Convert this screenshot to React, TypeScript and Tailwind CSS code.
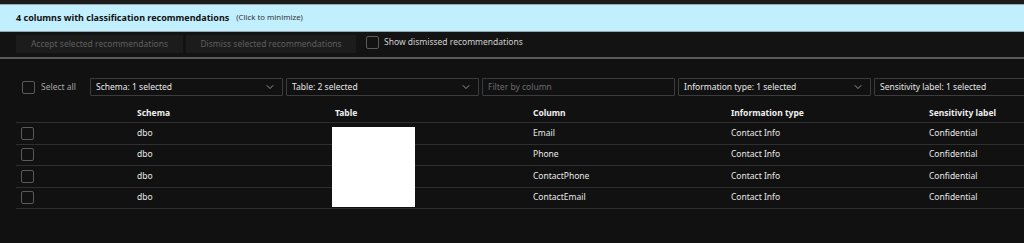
import { ChevronDown } from "lucide-react";

const rows = [
  { schema: "dbo", column: "Email" },
  { schema: "dbo", column: "Phone" },
  { schema: "dbo", column: "ContactPhone" },
  { schema: "dbo", column: "ContactEmail" },
];

function Checkbox() {
  return <div className="w-[13px] h-[13px] border border-[#5a5a5a] rounded-[2px] shrink-0" />;
}

function Dropdown({ label, w = "w-[193px]" }: { label: string; w?: string }) {
  return (
    <div className={`${w} h-[18px] shrink-0 border border-[#3c3c3c] rounded-[1px] flex items-center justify-between pl-[5px] pr-[6px] text-[#e8e8e8]`}>
      <span>{label}</span>
      <ChevronDown size={12} strokeWidth={1.5} className="text-[#bdbdbd]" />
    </div>
  );
}

export default function App() {
  return (
    <div className="w-[1024px] h-[243px] bg-[#111111] overflow-hidden text-[8.5px] whitespace-nowrap" style={{ fontFamily: '"Noto Sans", "Open Sans", sans-serif' }}>
      <div className="h-[4px] bg-[#1b1b1b]" />
      <div className="h-[28px] bg-[#c1effe] border-y border-[#9aa8ad] flex items-center pl-[16px] gap-[7px]">
        <span className="font-bold text-[9px] text-[#111111]">4 columns with classification recommendations</span>
        <span className="text-[7.8px] text-[#333333]">(Click to minimize)</span>
      </div>
      <div className="h-[27px] flex items-start pt-[3px] pl-[16px] gap-[3px] border-b-2 border-[#5a5a5a] bg-[#131313]">
        <div className="w-[167px] h-[18px] bg-[#1c1c1c] text-[#5f5f5f] flex items-center justify-center">Accept selected recommendations</div>
        <div className="w-[170px] h-[18px] bg-[#1c1c1c] text-[#5f5f5f] flex items-center justify-center">Dismiss selected recommendations</div>
        <div className="flex items-start gap-[5px] ml-[7px] pt-[1px] text-[#cfcfcf]">
          <Checkbox />
          <span className="leading-[12px]">Show dismissed recommendations</span>
        </div>
      </div>
      <div className="flex items-center pl-[22px] mt-[19px] h-[18px]">
        <Checkbox />
        <span className="ml-[6px] w-[49px] shrink-0 text-[#a8a8a8]">Select all</span>
        <div className="flex gap-[3px] shrink-0">
          <Dropdown label="Schema: 1 selected" />
          <Dropdown label="Table: 2 selected" />
          <div className="w-[193px] h-[18px] shrink-0 border border-[#3c3c3c] rounded-[1px] flex items-center pl-[5px] text-[#6c6c6c]">Filter by column</div>
          <Dropdown label="Information type: 1 selected" />
          <Dropdown label="Sensitivity label: 1 selected" w="w-[200px]" />
        </div>
      </div>
      <div className="ml-[16px] mt-[8px] relative">
        <div className="grid grid-cols-[121px_198px_198px_198px_198px_198px] h-[19px] items-center border-b border-[#2e2e2e] font-bold text-[#f0f0f0]">
          <div />
          <div>Schema</div>
          <div>Table</div>
          <div>Column</div>
          <div>Information type</div>
          <div>Sensitivity label</div>
        </div>
        {rows.map((r) => (
          <div key={r.column} className="grid grid-cols-[121px_198px_198px_198px_198px_198px] h-[21.5px] items-center border-b border-[#2e2e2e] text-[#e8e8e8]">
            <div className="pl-[5px]"><Checkbox /></div>
            <div>{r.schema}</div>
            <div />
            <div>{r.column}</div>
            <div>Contact Info</div>
            <div>Confidential</div>
          </div>
        ))}
        <div className="absolute left-[316px] top-[23px] w-[83px] h-[80px] bg-white" />
      </div>
    </div>
  );
}
